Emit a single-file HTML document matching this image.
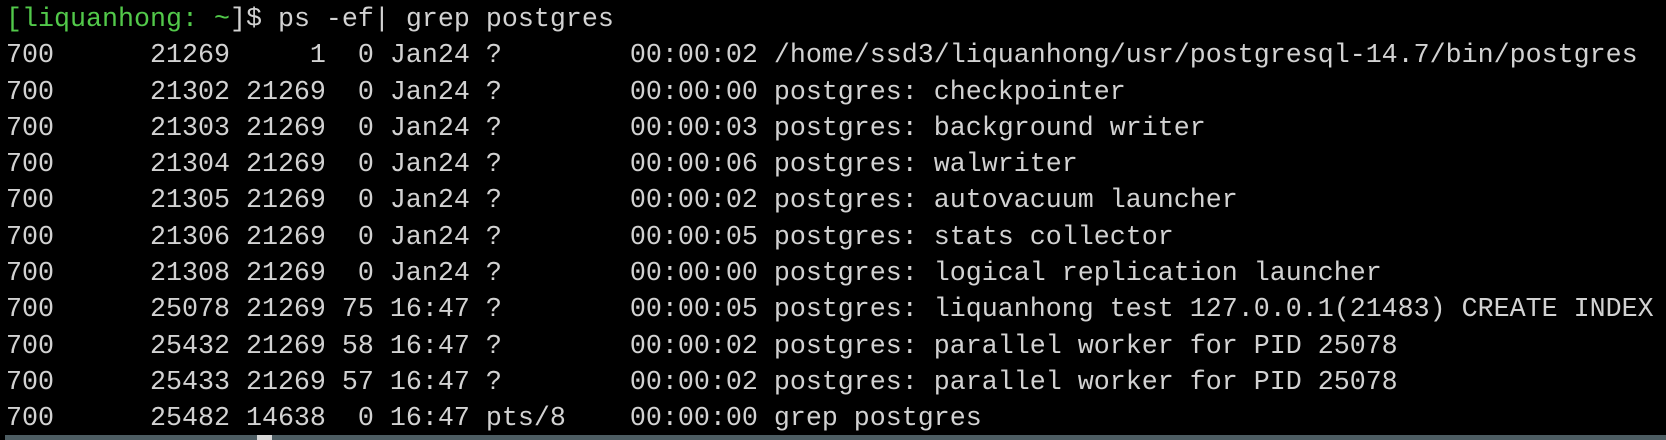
<!DOCTYPE html>
<html><head><style>
html,body{margin:0;padding:0;background:#000;width:1666px;height:440px;overflow:hidden}
pre{margin:0;position:absolute;left:6px;top:2px;font-family:"Liberation Mono",monospace;font-size:26.66px;line-height:36.3px;color:#d2d2d2}
.g{color:#52c94a}
.bar{position:absolute;left:5px;top:435px;width:1661px;height:5px;background:#4d5d63}
.m{position:absolute;left:257px;top:435px;width:15px;height:5px;background:#d8d8d8}
</style></head><body>
<pre><span class="g">[liquanhong: ~</span>]$ ps -ef| grep postgres
700      21269     1  0 Jan24 ?        00:00:02 /home/ssd3/liquanhong/usr/postgresql-14.7/bin/postgres
700      21302 21269  0 Jan24 ?        00:00:00 postgres: checkpointer
700      21303 21269  0 Jan24 ?        00:00:03 postgres: background writer
700      21304 21269  0 Jan24 ?        00:00:06 postgres: walwriter
700      21305 21269  0 Jan24 ?        00:00:02 postgres: autovacuum launcher
700      21306 21269  0 Jan24 ?        00:00:05 postgres: stats collector
700      21308 21269  0 Jan24 ?        00:00:00 postgres: logical replication launcher
700      25078 21269 75 16:47 ?        00:00:05 postgres: liquanhong test 127.0.0.1(21483) CREATE INDEX
700      25432 21269 58 16:47 ?        00:00:02 postgres: parallel worker for PID 25078
700      25433 21269 57 16:47 ?        00:00:02 postgres: parallel worker for PID 25078
700      25482 14638  0 16:47 pts/8    00:00:00 grep postgres</pre>
<div class="bar"></div><div class="m"></div>
</body></html>
